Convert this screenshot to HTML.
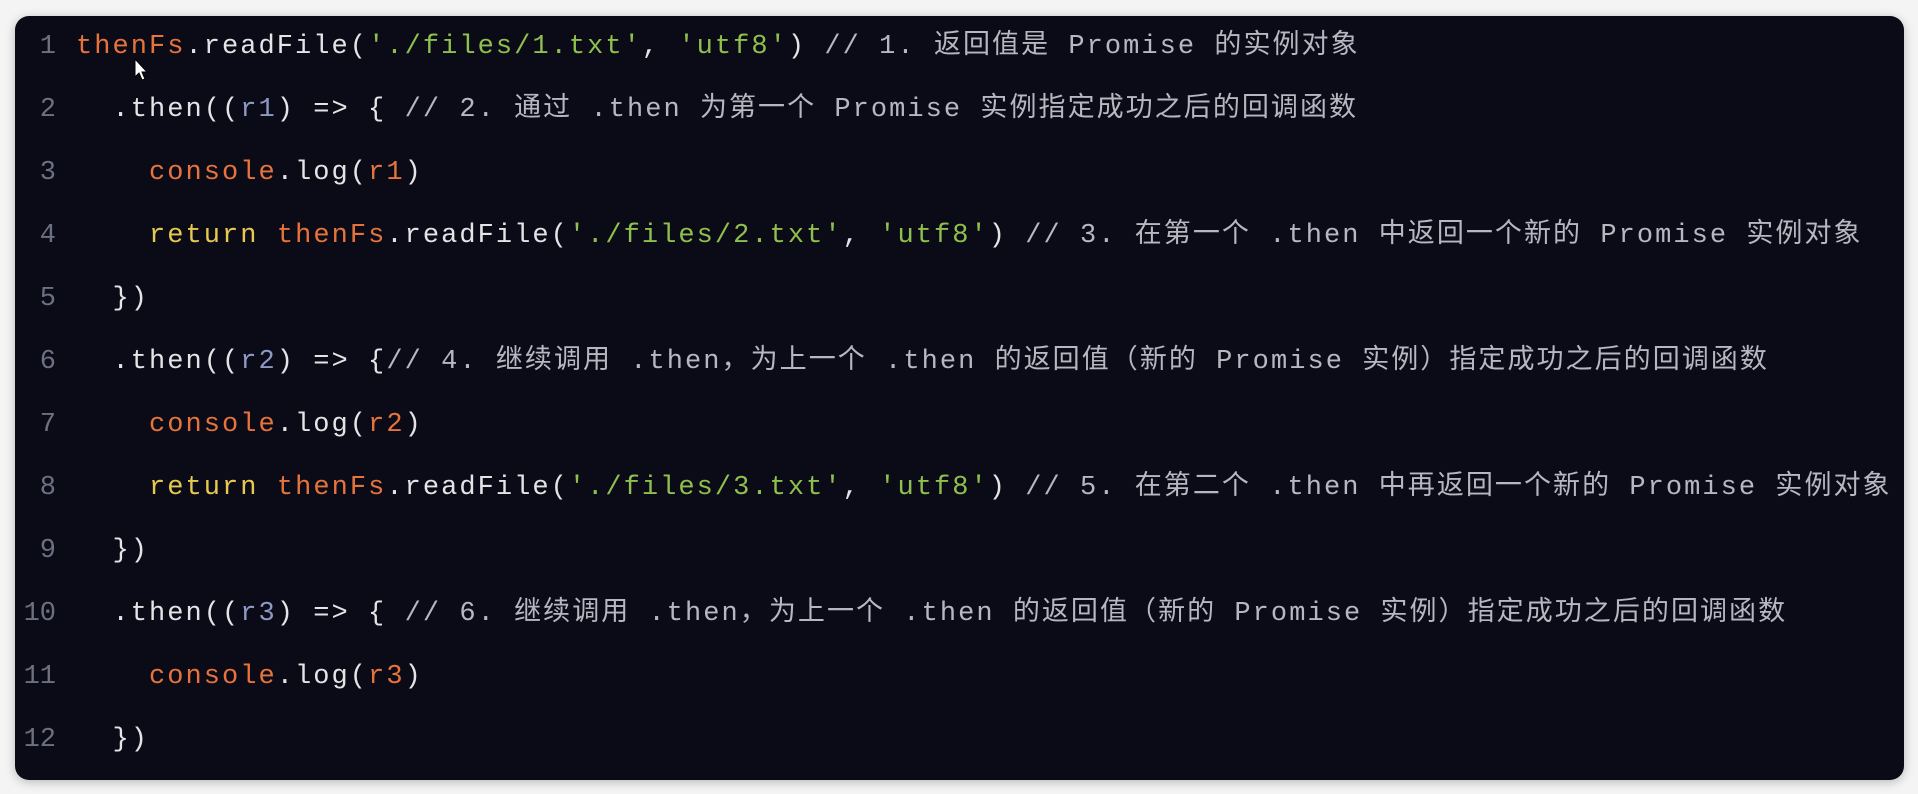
<!DOCTYPE html>
<html><head><meta charset="utf-8"><style>
html,body{margin:0;padding:0;width:1918px;height:794px;background:#f4f4f4;overflow:hidden}
.panel{position:absolute;left:15px;top:16px;width:1889px;height:764px;background:#0b0b18;border-radius:14px;box-shadow:0 2px 10px rgba(0,0,0,.25)}
.ln{position:absolute;left:0;width:56px;text-align:right;color:#6c7080;font:27px "Liberation Mono","Noto Sans CJK SC",monospace;letter-spacing:0}
.code{position:absolute;left:76px;white-space:pre;color:#e4e4e6;font:27px "Liberation Mono","Noto Sans CJK SC",monospace;letter-spacing:2.05px}
.l{height:40px;line-height:40px}
.o{color:#e5733b}.g{color:#8fbf4c}.y{color:#e6c94e}.p{color:#8d98c4}.c{color:#b6b7c0}
</style></head><body>
<div class="panel"></div>
<div style="position:absolute;left:0;top:0">
<div class="ln l" style="top:27px;position:absolute">1</div>
<div class="ln l" style="top:90px;position:absolute">2</div>
<div class="ln l" style="top:153px;position:absolute">3</div>
<div class="ln l" style="top:216px;position:absolute">4</div>
<div class="ln l" style="top:279px;position:absolute">5</div>
<div class="ln l" style="top:342px;position:absolute">6</div>
<div class="ln l" style="top:405px;position:absolute">7</div>
<div class="ln l" style="top:468px;position:absolute">8</div>
<div class="ln l" style="top:531px;position:absolute">9</div>
<div class="ln l" style="top:594px;position:absolute">10</div>
<div class="ln l" style="top:657px;position:absolute">11</div>
<div class="ln l" style="top:720px;position:absolute">12</div>

<div class="code l" style="top:27px"><span class="o">thenFs</span>.readFile(<span class="g">'./files/1.txt'</span>, <span class="g">'utf8'</span>) <span class="c">// 1. 返回值是 Promise 的实例对象</span></div>
<div class="code l" style="top:90px">  .then((<span class="p">r1</span>) =&gt; { <span class="c">// 2. 通过 .then 为第一个 Promise 实例指定成功之后的回调函数</span></div>
<div class="code l" style="top:153px">    <span class="o">console</span>.log(<span class="o">r1</span>)</div>
<div class="code l" style="top:216px">    <span class="y">return</span> <span class="o">thenFs</span>.readFile(<span class="g">'./files/2.txt'</span>, <span class="g">'utf8'</span>) <span class="c">// 3. 在第一个 .then 中返回一个新的 Promise 实例对象</span></div>
<div class="code l" style="top:279px">  })</div>
<div class="code l" style="top:342px">  .then((<span class="p">r2</span>) =&gt; {<span class="c">// 4. 继续调用 .then，为上一个 .then 的返回值（新的 Promise 实例）指定成功之后的回调函数</span></div>
<div class="code l" style="top:405px">    <span class="o">console</span>.log(<span class="o">r2</span>)</div>
<div class="code l" style="top:468px">    <span class="y">return</span> <span class="o">thenFs</span>.readFile(<span class="g">'./files/3.txt'</span>, <span class="g">'utf8'</span>) <span class="c">// 5. 在第二个 .then 中再返回一个新的 Promise 实例对象</span></div>
<div class="code l" style="top:531px">  })</div>
<div class="code l" style="top:594px">  .then((<span class="p">r3</span>) =&gt; { <span class="c">// 6. 继续调用 .then，为上一个 .then 的返回值（新的 Promise 实例）指定成功之后的回调函数</span></div>
<div class="code l" style="top:657px">    <span class="o">console</span>.log(<span class="o">r3</span>)</div>
<div class="code l" style="top:720px">  })</div>
</div>
<svg style="position:absolute;left:134px;top:58px" width="16" height="24" viewBox="0 0 16 24"><path d="M1 1 L1 19 L5 15 L8 22 L11 21 L8 14 L13 14 Z" fill="#fff" stroke="#000" stroke-width="1"/></svg>
</body></html>
